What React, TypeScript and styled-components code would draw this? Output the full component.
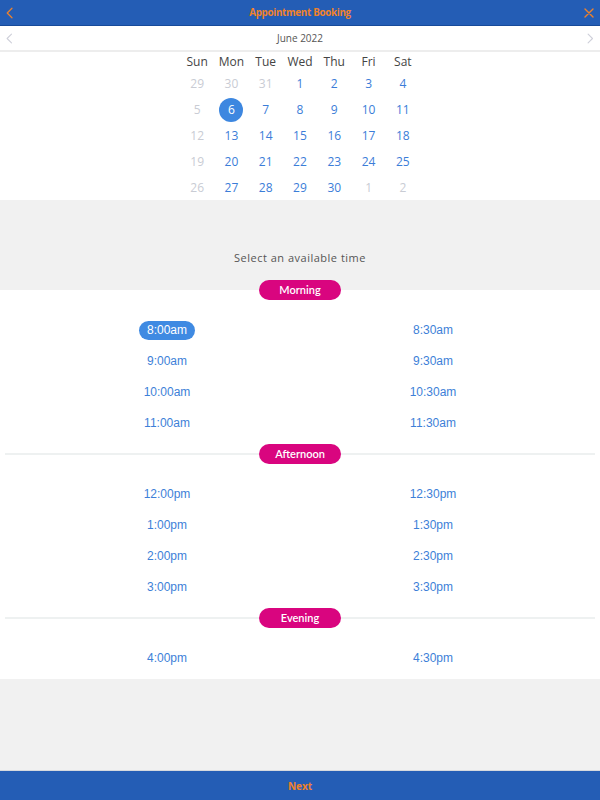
import React from "react";
import styled, { createGlobalStyle } from "styled-components";

const Global = createGlobalStyle`
  html, body { margin: 0; padding: 0; }
  body { background: #f1f1f1; font-family: "Open Sans", "Noto Sans", sans-serif; }
  #root { height: 100vh; }
`;

const Page = styled.div`
  display: flex;
  flex-direction: column;
  height: 100vh;
  background: #f1f1f1;
`;

const TopBar = styled.header`
  height: 25px;
  flex: none;
  background: #245db5;
  border-bottom: 1px solid #174a9a;
  display: grid;
  grid-template-columns: 30px 1fr 30px;
  align-items: center;
`;

const Title = styled.h1`
  margin: 0;
  text-align: center;
  font-size: 9.8px;
  letter-spacing: -0.3px;
  font-weight: 700;
  color: #f0822a;
  font-family: "Open Sans", sans-serif;
`;

const IconSlot = styled.div<{ $align: "start" | "end" }>`
  display: flex;
  justify-content: ${(p) => (p.$align === "start" ? "flex-start" : "flex-end")};
  padding: 0 6px;
  align-items: center;
`;

const MonthBar = styled.div`
  height: 24px;
  flex: none;
  background: #fff;
  border-bottom: 2px solid #ededed;
  display: grid;
  grid-template-columns: 30px 1fr 30px;
  align-items: center;
`;

const MonthLabel = styled.div`
  text-align: center;
  font-size: 10px;
  color: #555;
`;

const Calendar = styled.div`
  background: #fff;
  flex: none;
  display: flex;
  justify-content: center;
`;

const DayGrid = styled.div`
  width: 240px;
  display: grid;
  grid-template-columns: repeat(7, 1fr);
  grid-template-rows: 19px repeat(5, 25.8px);
  justify-items: center;
  align-items: center;
`;

const WeekDay = styled.div`
  font-size: 12px;
  color: #444;
`;

const Day = styled.div<{ $muted?: boolean; $selected?: boolean }>`
  width: 24px;
  height: 24px;
  border-radius: 50%;
  display: flex;
  align-items: center;
  justify-content: center;
  font-size: 12px;
  color: ${(p) => (p.$selected ? "#fff" : p.$muted ? "#c9ccd4" : "#3b7dd8")};
  background: ${(p) => (p.$selected ? "#3d87e0" : "transparent")};
`;

const SelectBar = styled.div`
  height: 90px;
  flex: none;
  display: flex;
  align-items: flex-end;
  justify-content: center;
  padding-bottom: 25px;
  box-sizing: border-box;
  font-size: 11px;
  letter-spacing: 0.5px;
  color: #555;
`;

const TimesPanel = styled.div`
  background: #fff;
  flex: none;
  display: flex;
  flex-direction: column;
`;

const Group = styled.section<{ $first?: boolean }>`
  display: flex;
  flex-direction: column;
  margin-top: ${(p) => (p.$first ? "-10px" : "0")};
  padding-bottom: 5px;
`;

const PeriodHeader = styled.div<{ $line?: boolean }>`
  position: relative;
  height: 20px;
  display: flex;
  justify-content: center;
  align-items: center;
  &::before {
    content: "";
    display: ${(p) => (p.$line ? "block" : "none")};
    position: absolute;
    left: 5px;
    right: 5px;
    top: 9px;
    height: 2px;
    background: #eef1f1;
  }
`;

const Pill = styled.div`
  position: relative;
  width: 82px;
  height: 20px;
  border-radius: 10px;
  background: #d9057f;
  color: #fff;
  font-family: "Lato", "Open Sans", sans-serif;
  font-size: 11px;
  font-weight: 600;
  display: flex;
  align-items: center;
  justify-content: center;
`;

const SlotGrid = styled.div`
  display: grid;
  grid-template-columns: 1fr 1fr;
  grid-auto-rows: 31px;
  padding: 15px 34px 0;
  align-items: center;
  justify-items: center;
`;

const Slot = styled.div<{ $selected?: boolean }>`
  font-family: "Liberation Sans", Arial, sans-serif;
  font-size: 12px;
  line-height: 19px;
  height: 19px;
  padding: 0 8px;
  border-radius: 10px;
  color: ${(p) => (p.$selected ? "#fff" : "#3d7fd8")};
  background: ${(p) => (p.$selected ? "#3f8ae2" : "transparent")};
`;

const Filler = styled.div`
  flex: 1;
  background: #f1f1f1;
`;

const Footer = styled.footer`
  height: 29px;
  flex: none;
  background: #245db5;
  border-top: 1px solid #d6d9de;
  display: flex;
  align-items: center;
  justify-content: center;
  font-size: 10px;
  font-weight: 700;
  color: #f0822a;
`;

const Chevron = ({ dir, color, size }: { dir: "left" | "right"; color: string; size: number }) => (
  <svg width={size * 0.6} height={size} viewBox="0 0 6 10" fill="none">
    <path
      d={dir === "left" ? "M5 1 L1 5 L5 9" : "M1 1 L5 5 L1 9"}
      stroke={color}
      strokeWidth="1"
      strokeLinecap="round"
      strokeLinejoin="round"
    />
  </svg>
);

const CloseIcon = () => (
  <svg width="10" height="10" viewBox="0 0 10 10">
    <path d="M1 1 L9 9 M9 1 L1 9" stroke="#f0822a" strokeWidth="1.4" strokeLinecap="round" />
  </svg>
);

const weekdays = ["Sun", "Mon", "Tue", "Wed", "Thu", "Fri", "Sat"];
const days: { n: number; muted?: boolean; selected?: boolean }[] = [
  { n: 29, muted: true }, { n: 30, muted: true }, { n: 31, muted: true },
  { n: 1 }, { n: 2 }, { n: 3 }, { n: 4 },
  { n: 5, muted: true }, { n: 6, selected: true }, { n: 7 }, { n: 8 }, { n: 9 }, { n: 10 }, { n: 11 },
  { n: 12, muted: true }, { n: 13 }, { n: 14 }, { n: 15 }, { n: 16 }, { n: 17 }, { n: 18 },
  { n: 19, muted: true }, { n: 20 }, { n: 21 }, { n: 22 }, { n: 23 }, { n: 24 }, { n: 25 },
  { n: 26, muted: true }, { n: 27 }, { n: 28 }, { n: 29 }, { n: 30 }, { n: 1, muted: true }, { n: 2, muted: true },
];

const groups = [
  { name: "Morning", slots: ["8:00am", "8:30am", "9:00am", "9:30am", "10:00am", "10:30am", "11:00am", "11:30am"] },
  { name: "Afternoon", slots: ["12:00pm", "12:30pm", "1:00pm", "1:30pm", "2:00pm", "2:30pm", "3:00pm", "3:30pm"] },
  { name: "Evening", slots: ["4:00pm", "4:30pm"] },
];

export default function App() {
  return (
    <Page>
      <Global />
      <TopBar>
        <IconSlot $align="start"><Chevron dir="left" color="#f0822a" size={12} /></IconSlot>
        <Title>Appointment Booking</Title>
        <IconSlot $align="end"><CloseIcon /></IconSlot>
      </TopBar>
      <MonthBar>
        <IconSlot $align="start"><Chevron dir="left" color="#cfd0da" size={11} /></IconSlot>
        <MonthLabel>June 2022</MonthLabel>
        <IconSlot $align="end"><Chevron dir="right" color="#cfd0da" size={11} /></IconSlot>
      </MonthBar>
      <Calendar>
        <DayGrid>
          {weekdays.map((w) => (
            <WeekDay key={w}>{w}</WeekDay>
          ))}
          {days.map((d, i) => (
            <Day key={i} $muted={d.muted} $selected={d.selected}>{d.n}</Day>
          ))}
        </DayGrid>
      </Calendar>
      <SelectBar>Select an available time</SelectBar>
      <TimesPanel>
        {groups.map((g, gi) => (
          <Group key={g.name} $first={gi === 0}>
            <PeriodHeader $line={gi !== 0}>
              <Pill>{g.name}</Pill>
            </PeriodHeader>
            <SlotGrid>
              {g.slots.map((s) => (
                <Slot key={s} $selected={s === "8:00am"}>{s}</Slot>
              ))}
            </SlotGrid>
          </Group>
        ))}
      </TimesPanel>
      <Filler />
      <Footer>Next</Footer>
    </Page>
  );
}
